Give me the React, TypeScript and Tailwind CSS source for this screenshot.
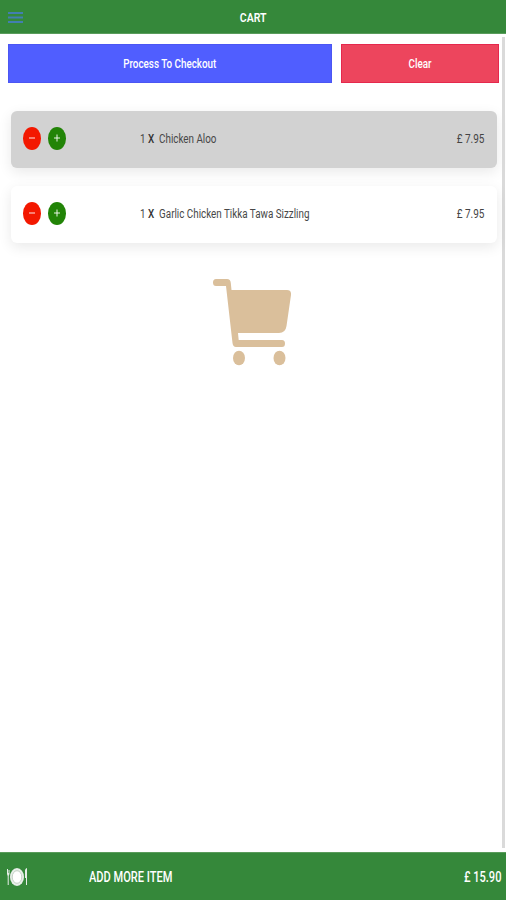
import type { ReactNode } from "react";

function Narrow({ children, className = "" }: { children: ReactNode; className?: string }) {
  return <span className={`inline-block whitespace-pre ${className}`}>{children}</span>;
}

function RoundButton({ label, className }: { label: string; className: string }) {
  return (
    <button aria-label={label} className={`flex h-[22.5px] w-[18px] items-center justify-center rounded-[50%] ${className}`}>
      <svg width="8" height="10" viewBox="0 0 8 10" stroke="#fff" strokeOpacity="0.75" strokeWidth="1.2">
        <path d="M1 5H7" />
        {label === "Add" && <path d="M4 1.5V8.5" />}
      </svg>
    </button>
  );
}

function CartRow({ name, price, className }: { name: string; price: string; className: string }) {
  return (
    <div className={`flex h-[57px] rounded-[6px] pt-[16px] pr-[12px] pl-[12px] shadow-[0_4px_14px_rgba(0,0,0,0.09)] ${className}`}>
      <div className="flex w-[117px] gap-[7px]">
        <RoundButton label="Remove" className="bg-[#f31800]" />
        <RoundButton label="Add" className="bg-[#228407]" />
      </div>
      <div className="flex-1 pt-[1px] text-[12px] leading-[23px] text-[#484848]">
        <Narrow className="origin-left scale-x-[0.82]">
          1 <span className="font-medium text-[#333]">X</span>{"  "}{name}
        </Narrow>
      </div>
      <div className="text-[12px] leading-[24px] text-[#444]">
        <Narrow className="origin-right scale-x-[0.83]">{price}</Narrow>
      </div>
    </div>
  );
}

export default function App() {
  return (
    <div className="flex h-[900px] w-[506px] flex-col bg-white font-['Roboto',sans-serif]">
      <header className="grid h-[34px] shrink-0 grid-cols-3 items-center border-b border-[#599c5b] bg-[#35883a] pt-[2px]">
        <svg className="ml-[8px]" width="15" height="13" viewBox="0 0 15 13" fill="none" stroke="#427fb0" strokeWidth="2">
          <path d="M0 2H15M0 6.500H15M0 11H15" />
        </svg>
        <div className="text-center text-[13.5px] font-semibold text-white">
          <Narrow className="scale-x-[0.78]">CART</Narrow>
        </div>
      </header>
      <main className="flex min-h-0 flex-1">
        <div className="w-[502px] pt-[10px]">
          <div className="flex h-[39px] gap-[9px] pr-[3px] pl-[8px] text-[12px] font-medium text-white">
            <button className="w-[324px] border border-[#4b56f3] bg-[#505eff]">
              <Narrow className="scale-x-[0.82]">Process To Checkout</Narrow>
            </button>
            <button className="w-[158px] border border-[#e5284d] bg-[#ed455d]">
              <Narrow className="scale-x-[0.82]">Clear</Narrow>
            </button>
          </div>
          <div className="mt-[28px] flex flex-col gap-[18px] pr-[5.5px] pl-[10.5px]">
            <CartRow name="Chicken Aloo" price="£ 7.95" className="bg-[#d2d2d2]" />
            <CartRow name="Garlic Chicken Tikka Tawa Sizzling" price="£ 7.95" className="relative bg-white" />
          </div>
          <svg className="mt-[36px] ml-[213px]" width="78" height="87" viewBox="0 0 78 87" fill="#dabf9b">
            <path d="M3 0H14Q17.500 0 17.800 4L18.500 11H74Q78.500 11 78 16L73.500 47Q72.500 54 66 54H25L25.700 61H69Q72 61 72 64.500T69 68H23Q20 68 19.500 64L13 7H3Q0 7 0 3.500T3 0Z" />
            <ellipse cx="26" cy="79" rx="6" ry="7.300" />
            <ellipse cx="66.500" cy="79" rx="6" ry="7.300" />
          </svg>
        </div>
        <div className="mt-[3px] mb-[4px] w-[3px] bg-[#dadada]" />
      </main>
      <footer className="flex h-[48px] shrink-0 items-center border-t border-[#599c5b] bg-[#35883a] pt-[1px] pr-[5px] pl-[7px] text-[14px] text-white">
        <svg width="21" height="20" viewBox="0 0 21 20" fill="#e7eee8">
          <ellipse cx="10" cy="10" rx="7" ry="9" />
          <ellipse cx="10" cy="10" rx="4.800" ry="6.300" fill="#fff" stroke="#c3d0c4" strokeWidth="1" />
          <path d="M0 2H1V6H1.500V3H2.500V7L1.700 9V18H0.700V9L0 7ZM18 3Q19 1 20 1V18H19V11H18Z" />
        </svg>
        <div className="ml-[61px] flex-1">
          <Narrow className="origin-left scale-x-[0.79] font-medium">ADD MORE ITEM</Narrow>
        </div>
        <Narrow className="origin-right scale-x-[0.79] font-medium">£ 15.90</Narrow>
      </footer>
    </div>
  );
}
